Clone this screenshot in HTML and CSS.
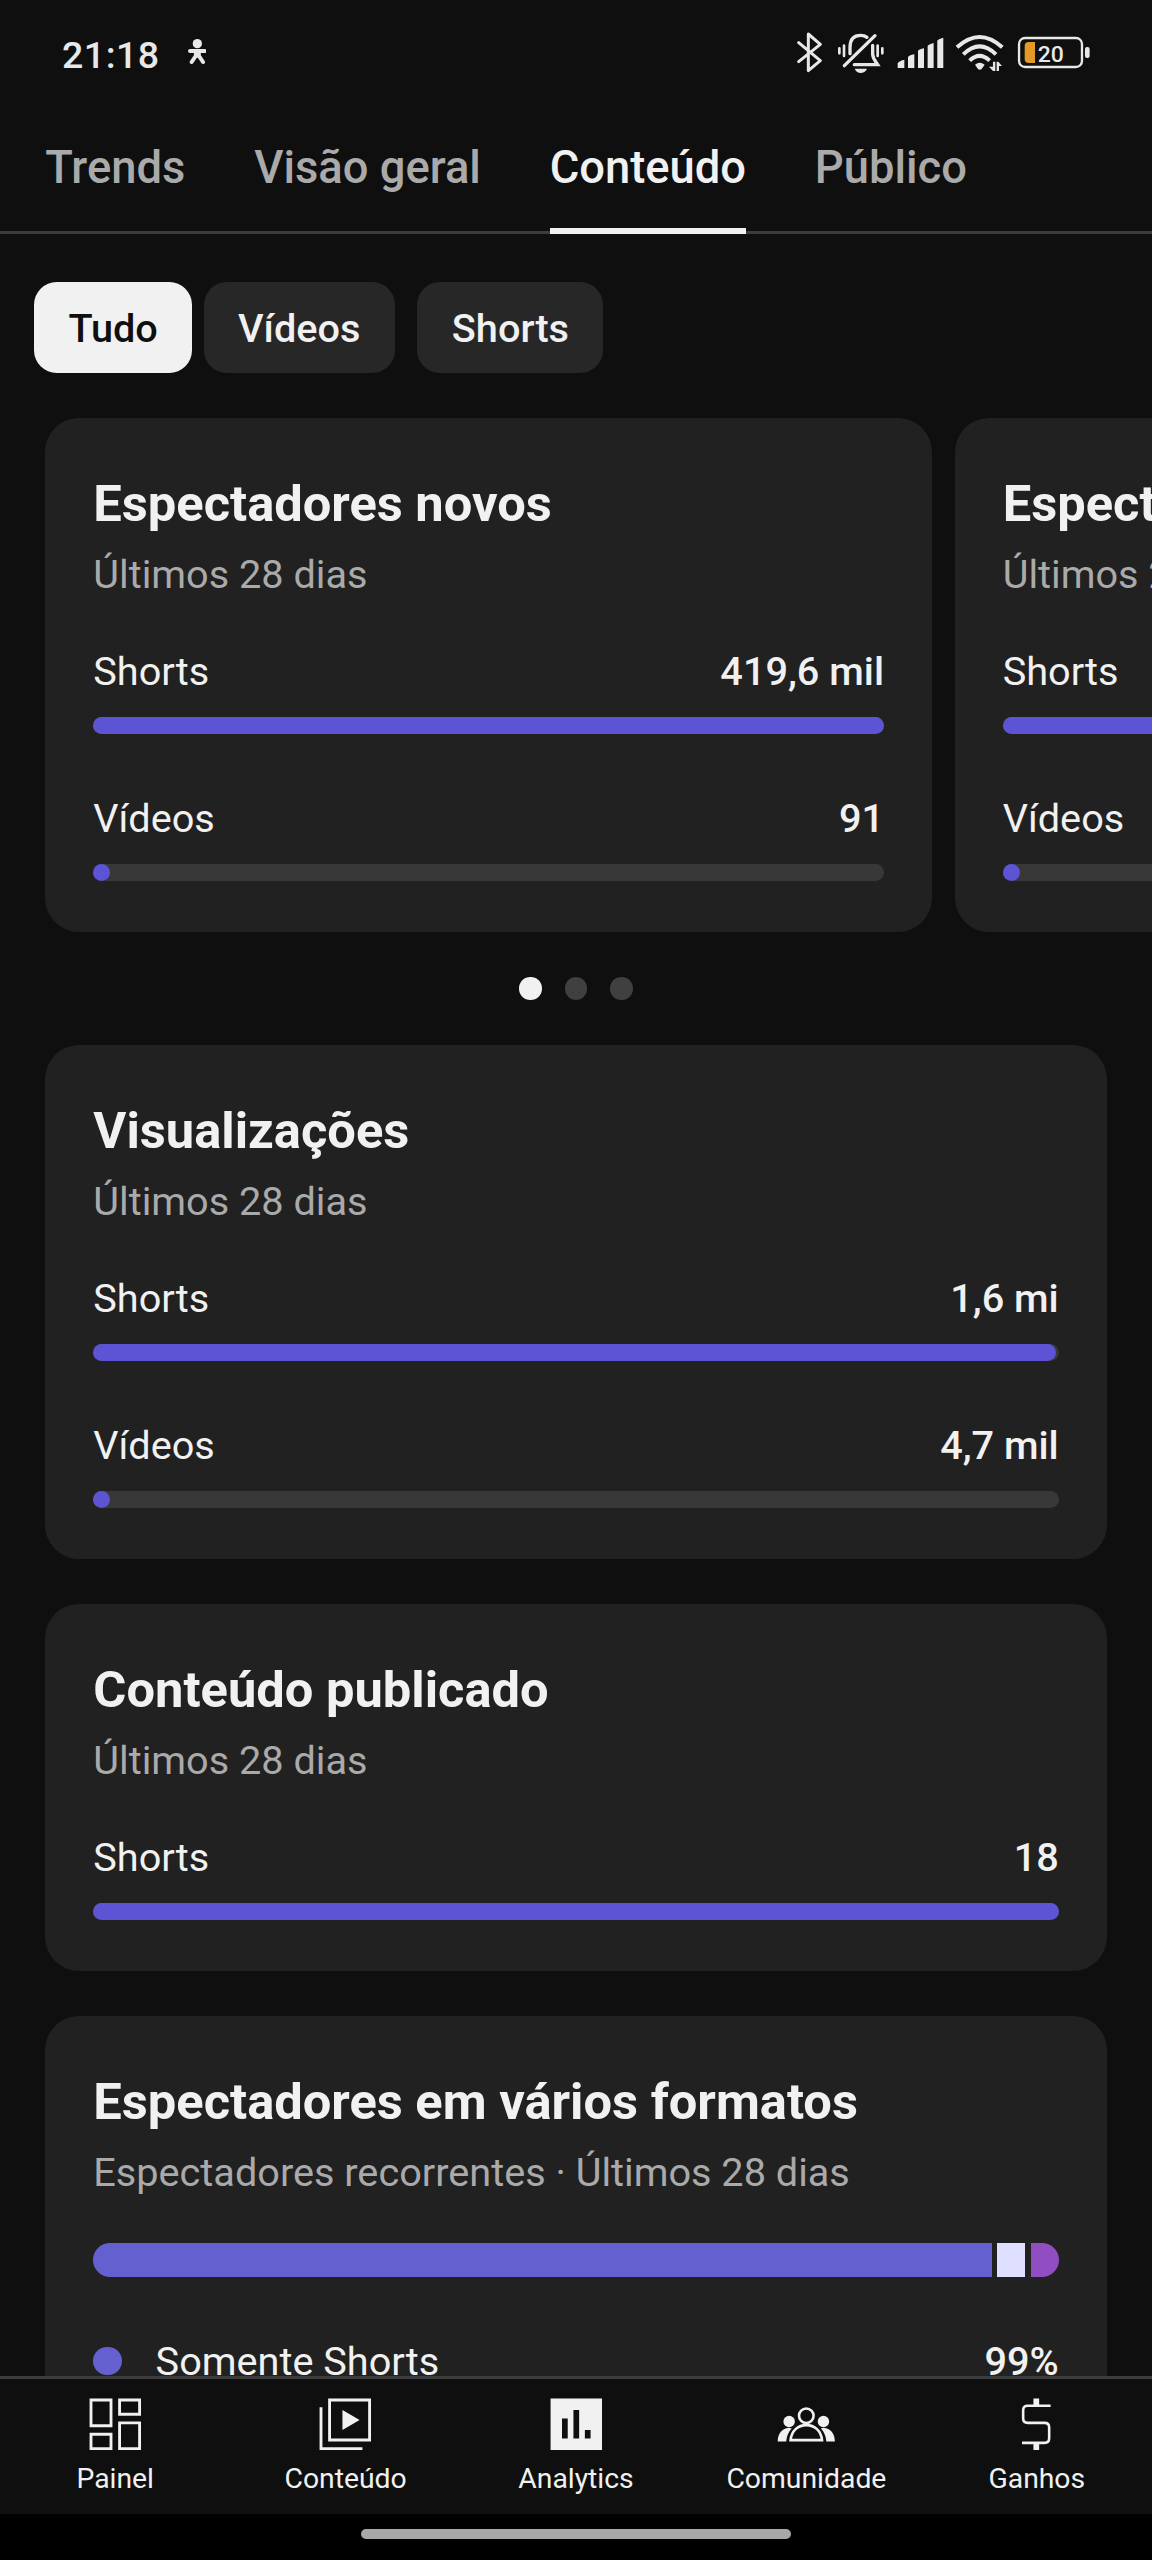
FILE: index.html
```html
<!DOCTYPE html>
<html lang="pt-BR">
<head>
<meta charset="utf-8">
<title>Analytics</title>
<link rel="stylesheet" href="styles.css">
</head>
<body>
<div class="screen">
  <header class="status">
    <span class="clock">21:18</span>
    <svg class="figure" viewBox="0 0 56 78"><circle cx="28" cy="14" r="14"/><path d="M6 36H50M25 48L11 69M31 48L45 69" fill="none" stroke="currentColor" stroke-width="12" stroke-linecap="round"/><path d="M16 32H40L37 54L28 56L19 54Z"/></svg>
    <div class="system">
      <svg class="bt line-art" viewBox="82 36 78 124" stroke-width="9" stroke-linejoin="round" stroke-linecap="round"><path d="M87 68L152 122L116 152V42L152 73L87 125"/></svg>
      <svg class="bell" viewBox="200 36 144 124"><g fill="none" stroke="currentColor" stroke-width="10" stroke-linecap="round"><path d="M239 101V82C239 55 254 46 271 46C278 46 285 48 290 52M307 76V103C308 116 315 123 322 134H252M314 47L222 137"/><path stroke-width="8" d="M207 85V100M221 77V108M322 77V108M336 85V100"/></g><path d="M253 146H290C286 155 279 159 271 159S257 155 253 146Z"/></svg>
      <svg class="signal" viewBox="380 36 142 124"><path d="M382 144V130Q384 124 402 119V144ZM413 144V112Q415 106 432 103V144ZM443 144V93Q445 88 461 85V144ZM472 144V78Q474 73 490 69V144ZM501 144V62Q503 57 519 53V144Z"/></svg>
      <svg class="wifi" viewBox="554 36 148 124"><g fill="none" stroke="currentColor" stroke-width="12"><path d="M560 82Q628 20 696 82"/><path d="M579 103Q628 55 677 103"/><path d="M598 122Q628 93 658 122"/></g><path d="M614 134Q628 122 643 134L634 147Q628 151 623 147Z"/><path d="M675 125V153H668L656 140H668V125ZM679 153V125H684L695 138H686V153Z"/></svg>
      <svg class="battery" viewBox="742 36 222 124"><rect x="748" y="54" width="189" height="87" rx="18" fill="none" stroke="currentColor" stroke-width="7"/><path d="M777 66H796V129H777Q765 129 765 117V78Q765 66 777 66Z" fill="#e19a28"/><rect x="946" y="81" width="14" height="33" rx="6"/><text x="804" y="126">20</text></svg>
    </div>
  </header>

  <nav class="tabs">
    <span class="tab">Trends</span>
    <span class="tab">Visão geral</span>
    <span class="tab active">Conteúdo</span>
    <span class="tab">Público</span>
  </nav>

  <main class="content">
    <div class="chips">
      <span class="chip selected">Tudo</span>
      <span class="chip">Vídeos</span>
      <span class="chip">Shorts</span>
    </div>

    <div class="carousel">
      <section class="card slide">
        <h2>Espectadores novos</h2>
        <p class="period">Últimos 28 dias</p>
        <div class="metrics">
          <div class="metric"><div class="line"><span>Shorts</span><b>419,6 mil</b></div><div class="track"><div class="fill" style="width:100%"></div></div></div>
          <div class="metric"><div class="line"><span>Vídeos</span><b>91</b></div><div class="track"><div class="fill" style="width:0.1%"></div></div></div>
        </div>
      </section>
      <section class="card slide">
        <h2>Espectadores</h2>
        <p class="period">Últimos 28 dias</p>
        <div class="metrics">
          <div class="metric"><div class="line"><span>Shorts</span></div><div class="track"><div class="fill" style="width:100%"></div></div></div>
          <div class="metric"><div class="line"><span>Vídeos</span></div><div class="track"><div class="fill" style="width:0.1%"></div></div></div>
        </div>
      </section>
    </div>
    <div class="dots"><i class="on"></i><i></i><i></i></div>

    <div class="stack">
      <section class="card">
        <h2>Visualizações</h2>
        <p class="period">Últimos 28 dias</p>
        <div class="metrics">
          <div class="metric"><div class="line"><span>Shorts</span><b>1,6 mi</b></div><div class="track"><div class="fill" style="width:99.7%"></div></div></div>
          <div class="metric"><div class="line"><span>Vídeos</span><b>4,7 mil</b></div><div class="track"><div class="fill" style="width:0.3%"></div></div></div>
        </div>
      </section>
      <section class="card">
        <h2>Conteúdo publicado</h2>
        <p class="period">Últimos 28 dias</p>
        <div class="metrics">
          <div class="metric"><div class="line"><span>Shorts</span><b>18</b></div><div class="track"><div class="fill" style="width:100%"></div></div></div>
        </div>
      </section>
      <section class="card">
        <h2>Espectadores em vários formatos</h2>
        <p class="period">Espectadores recorrentes · Últimos 28 dias</p>
        <div class="split"><i class="shorts"></i><i class="both"></i><i class="video"></i></div>
        <div class="legend"><i></i><span>Somente Shorts</span><b>99%</b></div>
      </section>
    </div>
  </main>

  <nav class="bottom">
    <div class="item">
      <svg class="line-art" viewBox="0 0 24 24"><path d="M3.5 3.5h7v9h-7zM13.5 3.5h7v5h-7zM3.5 15.5h7v5h-7zM13.5 11.5h7v9h-7z"/></svg>
      <span>Painel</span>
    </div>
    <div class="item">
      <svg viewBox="0 0 24 24"><path d="M6.5 3.5h14v14h-14zM3.5 6v14.5H18" fill="none" stroke="currentColor"/><path d="M11 7l6 3.5-6 3.5z"/></svg>
      <span>Conteúdo</span>
    </div>
    <div class="item">
      <svg viewBox="0 0 24 24"><path fill-rule="evenodd" d="M3 3h18v18H3zM7 10v7h2v-7zM11 7v10h2V7zM15 14v3h2v-3z"/></svg>
      <span>Analytics</span>
    </div>
    <div class="item">
      <svg viewBox="0 0 24 24"><g fill="none" stroke="currentColor" stroke-width=".9"><circle cx="12" cy="9" r="2.55"/><path d="M6.5 17.55C6.8 14.3 9.1 12.3 12 12.3S17.2 14.3 17.5 17.55Z"/></g><circle cx="6" cy="11" r="2"/><circle cx="18" cy="11" r="2"/><path d="M2 18C2 15.2 3.6 13.4 5.9 13.2L6.9 13.5C5.7 14.7 5.1 16.3 5 18ZM22 18C22 15.2 20.4 13.4 18.1 13.2L17.1 13.5C18.3 14.7 18.9 16.3 19 18Z"/></svg>
      <span>Comunidade</span>
    </div>
    <div class="item">
      <svg viewBox="0 0 24 24"><path d="M17 5.5H9C7.9 5.5 7.4 6 7.4 7.1V9.9C7.4 11 7.9 11.5 9 11.5H14.9C16 11.5 16.5 12 16.5 13.1V16.9C16.5 18 16 18.5 14.9 18.5H7" fill="none" stroke="currentColor" stroke-width=".9"/><path d="M11 3h2v2.5h-2zM11 18.5h2V21h-2z"/></svg>
      <span>Ganhos</span>
    </div>
  </nav>
  <footer class="gesture"><i></i></footer>
</div>
</body>
</html>
```
FILE: styles.css
```css
* { box-sizing: border-box; }
body { margin: 0; background: #0f0f0f; }
.screen {
  width: 1152px; height: 2560px; overflow: hidden;
  display: flex; flex-direction: column;
  background: #0f0f0f; color: #f1f1f1;
  font-family: Roboto, "Noto Sans", sans-serif; font-size: 39.67px;
}
svg { display: block; fill: currentColor; flex: none; }
.line-art { fill: none; stroke: currentColor; }
i { display: block; }
b { font-weight: 500; }

.status { height: 110px; flex: none; display: flex; padding: 0 60.7px 0 62px; color: #e8e8e8; }
.clock { font-size: 37.5px; font-weight: 500; line-height: 110px; letter-spacing: 0.5px; width: 125.7px; }
.figure { width: 18.7px; height: 26px; margin-top: 39px; }
.system { margin-left: auto; margin-top: 32px; display: flex; height: 41.3px; }
.system svg { height: 41.3px; }
.bt { width: 26px; }
.bell { width: 48px; margin-left: 13.3px; }
.signal { width: 47.3px; margin-left: 12px; }
.wifi { width: 49.3px; margin-left: 10.7px; }
.battery { width: 74px; margin-left: 13.3px; }
.battery text { font-size: 69px; font-weight: 500; }

.tabs {
  height: 124px; flex: none; display: flex; gap: 68.8px; padding-left: 45.3px;
  font-size: 45.33px; font-weight: 500; color: #aaa;
  box-shadow: inset 0 -3px #3c3c3c;
}
.tab { line-height: 116px; white-space: nowrap; }
.active { color: #f1f1f1; box-shadow: inset 0 -6px #f1f1f1; }

.content { flex: 1; min-height: 0; overflow: hidden; }
.chips { display: flex; margin: 48px 0 0 34px; height: 91px; }
.chip {
  padding: 0 34.4px; line-height: 93px; border-radius: 22.7px; margin-right: 22.7px;
  background: #272727; font-weight: 500;
}
.selected { background: #f1f1f1; color: #0f0f0f; margin-right: 11.3px; }

.carousel { display: flex; gap: 22.7px; padding-left: 45.3px; margin-top: 44.7px; }
.slide { flex: none; width: 886.7px; }
.card { background: #212121; border-radius: 34px; padding: 52.2px 48px 50.2px; }
h2 { margin: 0; font-size: 50.65px; line-height: 68px; font-weight: 700; white-space: nowrap; }
.period { margin: 9.4px 0 0; line-height: 56.7px; color: #aaa; white-space: nowrap; }
.metrics { margin-top: 40.2px; display: grid; gap: 57.3px; }
.line { display: flex; justify-content: space-between; line-height: 56.7px; margin-bottom: 16.3px; }
.track { height: 17px; border-radius: 8.5px; background: #383838; }
.fill { height: 17px; min-width: 17px; border-radius: 8.5px; background: #5c54d4; }

.dots { display: flex; justify-content: center; gap: 22.6px; margin: 45.3px 0 45px; }
.dots i { width: 22.7px; height: 22.7px; border-radius: 50%; background: #404040; }
.dots .on { background: #f1f1f1; }

.stack { display: grid; gap: 45.3px; padding: 0 45.3px; }
.split { display: flex; gap: 5.5px; height: 34px; margin-top: 40.9px; }
.split i { width: 28px; }
.split .shorts { flex: 1; background: #6560d0; border-radius: 17px 0 0 17px; }
.split .both { background: #dfdfff; }
.split .video { background: #914ec2; border-radius: 0 17px 17px 0; }
.legend { display: flex; align-items: center; margin-top: 56.8px; line-height: 56.7px; }
.legend i { width: 28.3px; height: 28.3px; border-radius: 50%; background: #6560d0; margin: 0 34px 2px 0; }
.legend b { margin-left: auto; }

.bottom {
  height: 138px; flex: none; border-top: 3px solid #3c3c3c; background: #0f0f0f;
  display: grid; grid-template-columns: repeat(5, 1fr);
}
.item { display: flex; flex-direction: column; align-items: center; padding-top: 11px; }
.item svg { width: 68.6px; height: 68.6px; }
.item span { font-size: 28.33px; line-height: 40px; }

.gesture { height: 46px; flex: none; background: #000; padding-top: 14.7px; }
.gesture i { width: 430px; height: 10.6px; margin: 0 auto; border-radius: 6px; background: #a8a8a8; }
```
